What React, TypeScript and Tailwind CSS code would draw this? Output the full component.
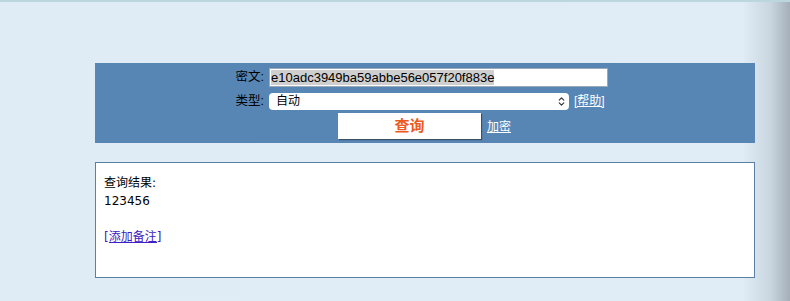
import { ChevronsUpDown } from 'lucide-react';

const cjk = { fontFamily: '"Liberation Sans", "Noto Sans CJK SC", sans-serif' };

export default function App() {
  return (
    <div
      className="relative h-[301px] w-[790px] overflow-hidden bg-[linear-gradient(to_right,#dfebf5_0%,#e0ecf6_94%,#c9d6e0_97.5%,#a4afb9_100%)]"
      style={cjk}
    >
      <div className="h-[2px] bg-[#bcd6de]" />
      <div className="pt-[61px] pl-[95px]">
        {/* query form */}
        <div className="h-[80px] w-[660px] bg-[#5886b4] pt-[4px] text-[12px] text-black">
          <div className="flex h-[21px] items-center">
            <div className="w-[170px] pr-[1px] text-right text-[12.5px]">密文:</div>
            <div className="ml-[4px] flex h-[19px] w-[339px] items-center border border-[#9aa9b8] bg-white pl-[1px] text-[13px]">
              <span className="bg-[#cfcfcf] leading-[15px]">e10adc3949ba59abbe56e057f20f883e</span>
            </div>
          </div>
          <div className="mt-[4px] flex h-[18px] items-center">
            <div className="w-[170px] pr-[1px] text-right text-[12.5px]">类型:</div>
            <div className="ml-[4px] flex h-[17px] w-[300px] items-center justify-between rounded-[4px] bg-white pl-[7px] pr-[2px]">
              <span>自动</span>
              <ChevronsUpDown className="h-[11px] w-[11px] text-[#333]" strokeWidth={2.5} />
            </div>
            <a href="#" className="ml-[5px] text-white underline">[帮助]</a>
          </div>
          <div className="mt-[3px] flex items-end">
            <button className="ml-[243px] h-[26px] w-[143px] bg-white text-[15px] font-bold text-[#ec5a1e] shadow-[1px_1px_1px_#3d4f63]">
              查询
            </button>
            <a href="#" className="mb-[3px] ml-[6px] text-white underline">加密</a>
          </div>
        </div>

        {/* result */}
        <div
          className="mt-[19px] h-[116px] w-[660px] border border-[#5c7fa3] bg-white pl-[8px] pt-[11px] text-[12px] leading-[18px] text-black"
          style={{ fontFamily: '"DejaVu Sans", "Noto Sans CJK SC", sans-serif' }}
        >
          <div>查询结果:</div>
          <div>123456</div>
          <div>&nbsp;</div>
          <a href="#" className="text-[#4020c4] underline">[添加备注]</a>
        </div>
      </div>
    </div>
  );
}
